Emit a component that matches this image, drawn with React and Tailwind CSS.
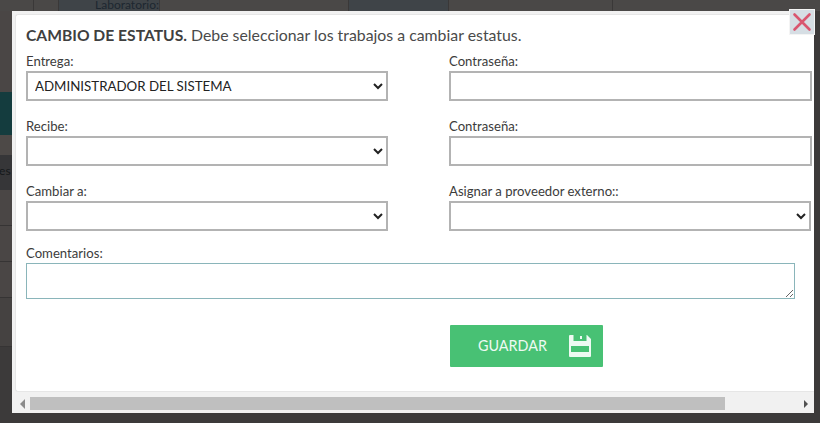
import React from 'react';

const labelClass = 'block text-[13.15px] leading-[16px] text-[#3c3c3c]';
const fieldClass = 'block h-[30px] bg-white border-2 border-[#b3b3b3] text-[13.3px] text-[#222222] outline-none';

const Field = ({ label, children, className }) => (
  <div className={className}>
    <label className={`${labelClass} mb-[2px]`}>{label}</label>
    {children}
  </div>
);

const SaveIcon = () => (
  <svg width="22" height="22" viewBox="0 0 22 22" fill="#eefaf2">
    <path
      fillRule="evenodd"
      d="M1 0H4.5V6H17.5V0H18L22 4V21a1 1 0 0 1-1 1H1a1 1 0 0 1-1-1V1a1 1 0 0 1 1-1zM2 11V17H20V11z"
    />
    <rect x="11" y="1" width="2" height="3" />
  </svg>
);

const App = () => {
  return (
    <div className="relative w-[820px] h-[423px] overflow-hidden bg-[#3c3a3a] font-['Lato','Open_Sans',sans-serif]">
      {/* page behind the overlay */}
      <div className="flex h-[11px] bg-[#4a4847]">
        <div className="w-[34px] border-r border-[#3a3838]" />
        <div className="w-[25px] border-r border-[#3a3838]" />
        <div className="w-[100px] bg-[#3f4448] text-right text-[12px] leading-[10px] text-[#1d2730] whitespace-nowrap">Laboratorio:</div>
        <div className="w-[165px] border-l border-[#3a3838]" />
        <div className="w-[25px] border-r border-[#3a3838]" />
        <div className="w-[100px] bg-[#3f4448] border-r border-[#3a3838]" />
        <div className="w-[164px] border-r border-[#3a3838]" />
        <div className="flex-1" />
      </div>
      <div className="w-[12px]">
        <div className="h-[81px] bg-[#4a4645]" />
        <div className="h-[43px] bg-[#143c3e]" />
        <div className="h-[20px] bg-[#4d4947]" />
        <div className="h-[35px] bg-[#363638] text-[12px] leading-[32px] text-[#15181a] whitespace-nowrap">
          <span className="block -ml-[5px]">res</span>
        </div>
        <div className="h-[36px] bg-[#4a4645] border-b border-[#363434]" />
        <div className="h-[36px] bg-[#4a4645] border-b border-[#363434]" />
        <div className="h-[36px] bg-[#4a4645] border-b border-[#363434]" />
        <div className="h-[49px] bg-[#454241] border-b border-[#363434]" />
      </div>

      {/* modal */}
      <div className="absolute left-[12px] top-[11px] w-[802px] h-[402px] bg-[#f1f1f1] flex flex-col pt-[3px]">
        <div className="flex-1 min-h-0 bg-white border-t border-l border-b border-[#e6e6e6] ml-[3px] rounded-l-[3px] pl-[10px] pt-[10px]">
          <p className="text-[15.85px] leading-[20px] text-[#4a4a4a] whitespace-nowrap">
            <b className="font-bold text-[15.65px] text-[#3f3f3f]">CAMBIO DE ESTATUS.</b> Debe seleccionar los trabajos a cambiar estatus.
          </p>
          <div className="grid grid-cols-[362px_363px] gap-x-[61px] gap-y-[17px] mt-[8px]">
            <Field label="Entrega:">
              <select className={`${fieldClass} w-[362px] pl-[3px]`} defaultValue="admin">
                <option value="admin">ADMINISTRADOR DEL SISTEMA</option>
              </select>
            </Field>
            <Field label="Contraseña:">
              <input type="password" className={`${fieldClass} w-[363px]`} />
            </Field>
            <Field label="Recibe:">
              <select className={`${fieldClass} w-[362px] pl-[3px]`}>
                <option value=""></option>
              </select>
            </Field>
            <Field label="Contraseña:">
              <input type="password" className={`${fieldClass} w-[363px]`} />
            </Field>
            <Field label="Cambiar a:">
              <select className={`${fieldClass} w-[362px] pl-[3px]`}>
                <option value=""></option>
              </select>
            </Field>
            <Field label="Asignar a proveedor externo::">
              <select className={`${fieldClass} w-[362px] pl-[3px]`}>
                <option value=""></option>
              </select>
            </Field>
          </div>
          <div className="mt-[14px]">
            <label className={`${labelClass} mb-[2px]`}>Comentarios:</label>
            <textarea className="block w-[769px] h-[36px] bg-white border border-[#8ab5ba] outline-none" />
          </div>
          <button className="flex items-center justify-between w-[153px] h-[42px] mt-[26px] ml-[424px] pl-[28px] pr-[12px] bg-[#48c174] rounded-[1px] text-[14.4px] text-[#eefaf2]">
            GUARDAR
            <SaveIcon />
          </button>
        </div>
        {/* horizontal scrollbar */}
        <div className="flex items-center h-[13px] mt-[5px] mb-[3px] ml-[3px]">
          <div className="flex justify-center w-[15px]">
            <div className="w-0 h-0 border-y-[5px] border-y-transparent border-r-[5px] border-r-[#8a8a8a]" />
          </div>
          <div className="w-[695px] h-[13px] bg-[#bfbfbf]" />
          <div className="flex justify-end flex-1 pr-[6px]">
            <div className="w-0 h-0 border-y-[4px] border-y-transparent border-l-[4px] border-l-[#505050]" />
          </div>
        </div>
      </div>

      {/* close button */}
      <button className="absolute left-[789px] top-[9px] flex items-center justify-center w-[26px] h-[26px] bg-[#d6dee4] border border-[#f4f4f4]">
        <svg width="20" height="20" viewBox="0 0 20 20" fill="none">
          <path d="M2.5 2.5l15 15M17.5 2.5l-15 15" stroke="#d9566f" strokeWidth="2.6" strokeLinecap="round" />
        </svg>
      </button>
    </div>
  );
};

export default App;
